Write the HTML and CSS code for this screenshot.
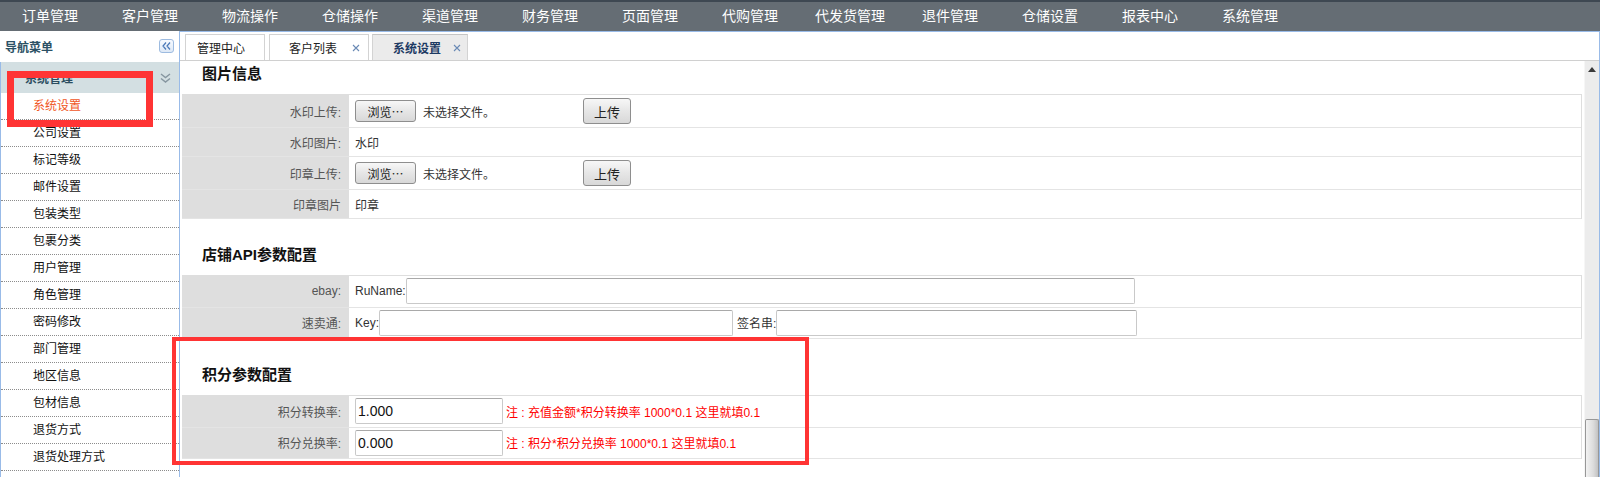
FILE: index.html
```html
<!DOCTYPE html>
<html lang="zh-CN">
<head>
  <meta charset="UTF-8" />
  <title>系统设置</title>
  <link rel="stylesheet" href="styles.css">
</head>
<body>
  <div class="topnav">
    <a>订单管理</a>
    <a>客户管理</a>
    <a>物流操作</a>
    <a>仓储操作</a>
    <a>渠道管理</a>
    <a>财务管理</a>
    <a>页面管理</a>
    <a>代购管理</a>
    <a>代发货管理</a>
    <a>退件管理</a>
    <a>仓储设置</a>
    <a>报表中心</a>
    <a>系统管理</a>
  </div>

  <div class="layout">
    <div class="sidebar">
      <div class="side-head">
        <span>导航菜单</span>
        <span class="collapse-btn">
          <svg width="9" height="8" viewBox="0 0 9 8"><path d="M4 .5L1 4l3 3.5M8 .5L5 4l3 3.5" fill="none" stroke="#4a78b8" stroke-width="1.2"/></svg>
        </span>
      </div>
      <div class="side-body">
        <div class="acc-head">
          <span>系统管理</span>
          <svg width="11" height="10" viewBox="0 0 11 10"><path d="M1 1l4.5 3.5L10 1M1 5.5L5.5 9 10 5.5" fill="none" stroke="#8696a0" stroke-width="1.4"/></svg>
        </div>
        <ul class="menu">
          <li class="active">系统设置</li>
          <li>公司设置</li>
          <li>标记等级</li>
          <li>邮件设置</li>
          <li>包装类型</li>
          <li>包裹分类</li>
          <li>用户管理</li>
          <li>角色管理</li>
          <li>密码修改</li>
          <li>部门管理</li>
          <li>地区信息</li>
          <li>包材信息</li>
          <li>退货方式</li>
          <li>退货处理方式</li>
        </ul>
      </div>
    </div>

    <div class="main">
      <div class="tabs">
        <div class="tab tab-home">管理中心</div>
        <div class="tab tab-list">客户列表<svg class="tab-close" width="8" height="8" viewBox="0 0 8 8"><path d="M1 1l6 6M7 1L1 7" stroke="#6a8ab5" stroke-width="1.1"/></svg></div>
        <div class="tab tab-active">系统设置<svg class="tab-close" width="8" height="8" viewBox="0 0 8 8"><path d="M1 1l6 6M7 1L1 7" stroke="#6a8ab5" stroke-width="1.1"/></svg></div>
      </div>

      <div class="main-body">
        <div class="content">
          <div class="section">
            <h3 class="sec-title">图片信息</h3>
            <div class="form">
              <div class="row row-file">
                <div class="lbl">水印上传:</div>
                <div class="val">
                  <span class="file"><span class="btn btn-browse">浏览⋯</span><span>未选择文件。</span></span>
                  <span class="btn btn-upload">上传</span>
                </div>
              </div>
              <div class="row row-text">
                <div class="lbl">水印图片:</div>
                <div class="val">水印</div>
              </div>
              <div class="row row-file">
                <div class="lbl">印章上传:</div>
                <div class="val">
                  <span class="file"><span class="btn btn-browse">浏览⋯</span><span>未选择文件。</span></span>
                  <span class="btn btn-upload">上传</span>
                </div>
              </div>
              <div class="row row-text">
                <div class="lbl">印章图片</div>
                <div class="val">印章</div>
              </div>
            </div>
          </div>

          <div class="section">
            <h3 class="sec-title">店铺API参数配置</h3>
            <div class="form">
              <div class="row row-input">
                <div class="lbl">ebay:</div>
                <div class="val">RuName:<input class="txt txt-runame" type="text"></div>
              </div>
              <div class="row row-input">
                <div class="lbl">速卖通:</div>
                <div class="val">Key:<input class="txt txt-key" type="text"><span class="sign">签名串:</span><input class="txt txt-sign" type="text"></div>
              </div>
            </div>
          </div>

          <div class="section">
            <h3 class="sec-title">积分参数配置</h3>
            <div class="form">
              <div class="row row-input">
                <div class="lbl">积分转换率:</div>
                <div class="val"><input class="txt txt-rate" type="text" value="1.000"><span class="note">注 : 充值金额*积分转换率 1000*0.1 这里就填0.1</span></div>
              </div>
              <div class="row row-input">
                <div class="lbl">积分兑换率:</div>
                <div class="val"><input class="txt txt-rate" type="text" value="0.000"><span class="note">注 : 积分*积分兑换率 1000*0.1 这里就填0.1</span></div>
              </div>
            </div>
          </div>
        </div>

        <div class="vscroll">
          <div class="vscroll-up">
            <svg width="8" height="5" viewBox="0 0 8 5"><path d="M0 5h8L4 0z" fill="#3a3a3a"/></svg>
          </div>
          <div class="vscroll-thumb"></div>
        </div>
      </div>
    </div>
  </div>

  <div class="mark mark-menu"></div>
  <div class="mark mark-points"></div>
</body>
</html>
```

FILE: styles.css
```css
* {
  box-sizing: border-box;
}

body {
  margin: 0;
  width: 1600px;
  height: 477px;
  overflow: hidden;
  position: relative;
  background: #fff;
  color: #222;
  font-family: "Liberation Sans", "Noto Sans CJK SC", sans-serif;
  font-size: 12px;
}

/* top menu */
.topnav {
  display: flex;
  height: 31px;
  background: #656d74;
  border-top: 2px solid #3e4852;
}

.topnav a {
  width: 100px;
  text-align: center;
  color: #fff;
  font-size: 14px;
  line-height: 29px;
  text-decoration: none;
}

.layout {
  display: flex;
  height: 446px;
}

/* left menu */
.sidebar {
  width: 179px;
  display: flex;
  flex-direction: column;
}

.side-head {
  height: 31px;
  display: flex;
  align-items: center;
  justify-content: space-between;
  padding: 0 5px;
  font-weight: bold;
  color: #2b5064;
}

.collapse-btn {
  width: 15px;
  height: 14px;
  margin-bottom: 2px;
  display: flex;
  align-items: center;
  justify-content: center;
  border: 1px solid #9dbbe0;
  border-radius: 3px;
  background: linear-gradient(#f7faff, #dde8f6);
}

.side-body {
  flex: 1;
  border-left: 1px solid #99bbe8;
}

.acc-head {
  height: 31px;
  display: flex;
  align-items: center;
  justify-content: space-between;
  padding: 0 8px 0 24px;
  background: #d3dfe2;
  font-weight: bold;
  color: #2b4d60;
}

.menu {
  list-style: none;
  margin: 0;
  padding: 0;
}

.menu li {
  height: 27px;
  line-height: 26px;
  padding-left: 32px;
  border-bottom: 1px dotted #8c8c8c;
  color: #111;
}

.menu li.active {
  color: #f0561e;
}

/* right panel */
.main {
  flex: 1;
  display: flex;
  flex-direction: column;
  border: 1px solid #99bbe8;
  border-bottom: none;
}

.tabs {
  height: 29px;
  display: flex;
  align-items: flex-end;
  padding-left: 5px;
  border-bottom: 1px solid #d0d0d0;
}

.tab {
  height: 26px;
  display: flex;
  align-items: center;
  border: 1px solid #d3d3d3;
  border-bottom: none;
  background: #fff;
}

.tab-home {
  width: 80px;
  padding-left: 11px;
}

.tab-list {
  width: 100px;
  margin-left: 4px;
  padding-left: 19px;
}

.tab-list .tab-close {
  margin-left: 15px;
}

.tab-active {
  width: 96px;
  margin-left: 3px;
  padding-left: 20px;
  background: #ebebeb;
  border-top-color: #c4c4c4;
  font-weight: bold;
  color: #1d3a63;
}

.tab-active .tab-close {
  margin-left: 12px;
}

.main-body {
  flex: 1;
  display: flex;
  min-height: 0;
}

.content {
  flex: 1;
  padding: 0 2px;
}

.section + .section {
  margin-top: 23px;
}

.sec-title {
  margin: 0;
  height: 33px;
  padding: 3px 0 0 20px;
  font-size: 15px;
  line-height: 20px;
  font-weight: bold;
  color: #111;
}

.form {
  border-top: 1px solid #dedede;
  border-right: 1px solid #dedede;
}

.row {
  display: flex;
  border-bottom: 1px solid #e4e4e4;
}

.row-file {
  height: 33px;
}

.row-text {
  height: 29px;
}

.row-input {
  height: 31.5px;
}

.lbl {
  width: 167px;
  display: flex;
  align-items: center;
  justify-content: flex-end;
  padding-right: 8px;
  background: #dedede;
  color: #555;
}

.val {
  flex: 1;
  display: flex;
  align-items: center;
  padding-left: 6px;
  color: #333;
}

.file {
  width: 222px;
  display: flex;
  align-items: center;
  gap: 7px;
}

.btn {
  display: inline-flex;
  align-items: center;
  justify-content: center;
  border: 1px solid #8e8e8e;
  border-radius: 3px;
  background: linear-gradient(#f7f7f7, #e6e6e6 50%, #d8d8d8);
  color: #222;
}

.btn-browse {
  width: 61px;
  height: 22px;
}

.btn-upload {
  width: 48px;
  height: 26px;
  margin-left: 6px;
  font-size: 13px;
}

.txt {
  height: 26px;
  margin: 0;
  padding: 0 2px;
  border: 1px solid #c9c9c9;
  border-top-color: #a9a9a9;
  border-radius: 2px;
  background: #fff;
  font-family: "Liberation Sans", "Noto Sans CJK SC", sans-serif;
  font-size: 14px;
  color: #111;
  outline: none;
}

.txt-runame {
  width: 729px;
}

.txt-key {
  width: 354px;
}

.sign {
  margin-left: 4px;
}

.txt-sign {
  width: 361px;
}

.txt-rate {
  width: 148px;
}

.note {
  margin-left: 3px;
  color: #f00;
}

/* fake scrollbar */
.vscroll {
  width: 15px;
  display: flex;
  flex-direction: column;
  background: #ececec;
  border-left: 1px solid #f6f6f6;
}

.vscroll-up {
  height: 18px;
  display: flex;
  justify-content: center;
  padding-top: 6px;
}

.vscroll-thumb {
  margin-top: auto;
  height: 58px;
  border: 1px solid #979797;
  border-bottom: none;
  border-radius: 2px 2px 0 0;
  background: linear-gradient(to right, #f2f2f2, #dcdcdc 60%, #c2c2c2);
}

/* red annotation boxes */
.mark {
  position: absolute;
  border-style: solid;
  border-color: #ff3434;
}

.mark-menu {
  left: 7px;
  top: 71px;
  width: 146px;
  height: 56px;
  border-width: 7px;
}

.mark-points {
  left: 172px;
  top: 337px;
  width: 637px;
  height: 128px;
  border-width: 4px;
}
```
